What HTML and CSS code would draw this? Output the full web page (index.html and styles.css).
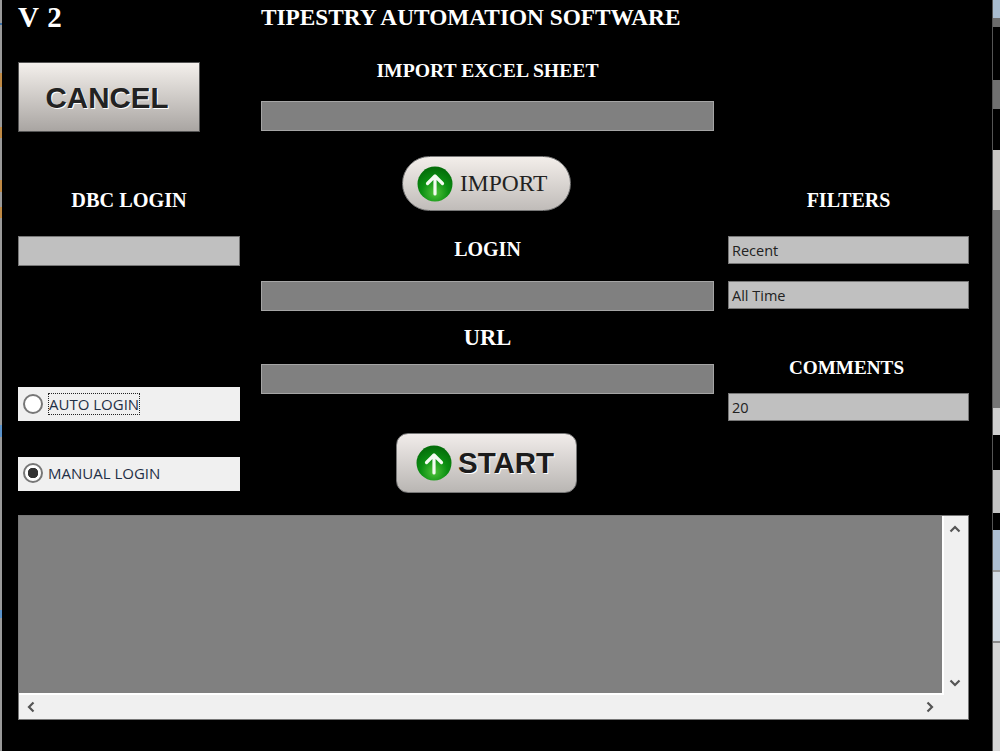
FILE: index.html
```html
<!DOCTYPE html>
<html lang="en">
<head>
<meta charset="utf-8">
<title>Tipestry Automation Software</title>
<link rel="stylesheet" href="styles.css">
</head>
<body>
<div class="desk">
  <div class="strip-left"></div>
  <main class="win">
    <div class="cols">
      <section class="col-left">
        <div class="version">V 2</div>
        <button class="cancel">CANCEL</button>
        <h2 class="lab dbc">DBC LOGIN</h2>
        <div class="field light"></div>
        <label class="radio auto"><span class="dot"></span><span class="focus">AUTO LOGIN</span></label>
        <label class="radio manual"><span class="dot on"></span><span>MANUAL LOGIN</span></label>
      </section>
      <section class="col-mid">
        <h1 class="title">TIPESTRY AUTOMATION SOFTWARE</h1>
        <h2 class="lab imp">IMPORT EXCEL SHEET</h2>
        <div class="field dark"></div>
        <button class="btn-import">
          <svg class="arrow" viewBox="0 0 36 36"><use href="#up"/></svg>IMPORT
        </button>
        <h2 class="lab login">LOGIN</h2>
        <div class="field dark"></div>
        <h2 class="lab url">URL</h2>
        <div class="field dark"></div>
        <button class="btn-start">
          <svg class="arrow" viewBox="0 0 36 36"><use href="#up"/></svg>START
        </button>
      </section>
      <section class="col-right">
        <h2 class="lab filters">FILTERS</h2>
        <div class="field grey">Recent</div>
        <div class="field grey second">All Time</div>
        <h2 class="lab comments">COMMENTS</h2>
        <div class="field grey">20</div>
      </section>
    </div>
    <div class="log">
      <div class="log-top">
        <div class="log-area"></div>
        <div class="vbar">
          <svg viewBox="0 0 12 8"><path d="M1.5 6.500 6 2l4.500 4.500" /></svg>
          <svg viewBox="0 0 12 8"><path d="M1.500 1.500 6 6l4.500-4.500" /></svg>
        </div>
      </div>
      <div class="hbar">
        <svg viewBox="0 0 8 12"><path d="M6.500 1.500 2 6l4.500 4.500" /></svg>
        <svg viewBox="0 0 8 12"><path d="M1.500 1.500 6 6l-4.500 4.500" /></svg>
      </div>
    </div>
  </main>
  <div class="strip-right">
    <div class="s s1"></div><div class="s s2"></div><div class="s s3"></div><div class="s s4"></div>
    <div class="s s5"></div><div class="s s6"></div><div class="s s7"></div><div class="s s8"></div>
    <div class="s s9"></div><div class="s s10"></div><div class="s s11"></div><div class="s s12"></div>
    <div class="s s13"></div><div class="s s14"></div>
  </div>
</div>
<svg class="defs" width="0" height="0" aria-hidden="true">
  <defs>
    <radialGradient id="ball" cx="50%" cy="75%" r="70%">
      <stop offset="0" stop-color="#4fc23a"/>
      <stop offset=".55" stop-color="#0b8f12"/>
      <stop offset="1" stop-color="#046e0a"/>
    </radialGradient>
    <symbol id="up" viewBox="0 0 36 36">
      <circle cx="18" cy="18" r="17.500" fill="url(#ball)"/>
      <path d="M18 28V10M10.500 17.500 18 10l7.500 7.500" fill="none" stroke="#f4fbf2" stroke-width="3.200" stroke-linecap="round" stroke-linejoin="round"/>
    </symbol>
  </defs>
</svg>
</body>
</html>
```
FILE: styles.css
```css
* { box-sizing: border-box; }
html, body { margin: 0; padding: 0; background: #000; }
.desk { display: flex; width: 1000px; height: 751px; overflow: hidden; }
.strip-left {
  width: 2px;
  background: linear-gradient(#9a9a9a 0 23px, #3a6ea5 23px 25px, #9a9a9a 25px 73px, #c08a45 73px 87px,
    #9a9a9a 87px 127px, #c08a45 127px 138px, #9a9a9a 138px 180px, #c08a45 180px 192px,
    #9a9a9a 192px 207px, #c08a45 207px 218px, #9a9a9a 218px 425px, #5b93cc 425px 437px,
    #9a9a9a 437px 610px, #5b93cc 610px 618px, #9a9a9a 618px);
}
.win { width: 990px; background: #000; padding: 0 23px 0 16px; }
.strip-right { width: 8px; display: flex; flex-direction: column; border-left: 1px solid #555; }
.s { flex: none; }
.s1 { height: 18px; background: #a9bccf; }
.s2 { height: 9px; background: #6c6c6c; }
.s3 { height: 53px; background: #000; }
.s4 { height: 29px; background: #707070; }
.s5 { height: 41px; background: #000; }
.s6 { height: 60px; background: #c8c6c3; }
.s7 { height: 198px; background: #757575; }
.s8 { height: 27px; background: #cfcfcf; }
.s9 { height: 35px; background: #000; }
.s10 { height: 43px; background: #c4c4c4; }
.s11 { height: 17px; background: #000; }
.s12 { height: 40px; background: #aebfd2; }
.s13 { height: 71px; background: #d3dbe3; border-top: 2px solid #999; }
.s14 { height: 110px; background: #d6d6d6; border-top: 2px solid #8a8a8a; }

.cols { display: flex; height: 515px; }
.col-left { width: 222px; margin-right: 21px; }
.col-mid { width: 453px; margin-right: 14px; display: flex; flex-direction: column; align-items: stretch; }
.col-right { width: 241px; }

.version, .title, .lab {
  font-family: "Liberation Serif", serif;
  font-weight: 700;
  color: #fff;
  margin: 0;
  text-align: center;
}
.version { font-size: 29px; line-height: 34px; text-align: left; height: 30px; letter-spacing: .8px; }
.title { font-size: 23.300px; line-height: 26px; margin-top: 4px; white-space: nowrap; text-align: left; }
.lab { font-size: 20px; line-height: 24px; white-space: nowrap; }

.field { height: 30px; border: 1px solid #777; }
.field.light { background: #c0c0c0; margin-top: 24px; }
.field.dark { background: #808080; border-color: #a5a5a5; }
.field.grey {
  height: 28px; background: #c0c0c0; border-color: #777;
  font: 14.500px/28px "Open Sans", sans-serif; color: #222; padding-left: 3px;
}
.field.grey.second { margin-top: 17px; }

.cancel {
  display: block; width: 182px; height: 70px; margin-top: 32px; padding: 2px 4px 0 0;
  border: 1px solid #555; border-radius: 0;
  background: linear-gradient(#f4f0ec, #a9a5a2);
  font: 700 29.500px "Liberation Sans", sans-serif; color: #222;
  text-shadow: 1px 1px 0 #fff;
}
.dbc { margin-top: 56px; font-size: 20.300px; }
.radio {
  display: flex; align-items: center; gap: 6px; height: 34px;
  background: #f0f0f0; padding-left: 5px;
  font: 15px "Open Sans", sans-serif; color: #1f2f46; white-space: nowrap;
}
.auto { margin-top: 121px; }
.manual { margin-top: 36px; gap: 5px; padding-bottom: 2px; }
.dot { width: 20px; height: 20px; border-radius: 50%; border: 2px solid #777; background: #fff; flex: none; }
.dot.on { background: radial-gradient(circle, #333 0 5px, #fff 5.500px); }
.focus { outline: 1px dotted #222; outline-offset: 0; line-height: 20px; }

.imp { margin-top: 28px; font-size: 19.700px; }
.imp + .field { margin-top: 19px; }
.btn-import {
  align-self: center; display: flex; align-items: center; justify-content: flex-start;
  width: 169px; height: 55px; margin: 25px 2px 0 0; padding: 0 0 0 14px; gap: 7px;
  border: 1px solid #777; border-radius: 28px;
  background: linear-gradient(#f3eeea, #c0bcb9);
  font: 23.500px "Liberation Serif", serif; color: #222;
}
.btn-import .arrow { width: 36px; height: 36px; }
.login { margin-top: 26px; }
.login + .field { margin-top: 20px; }
.url { margin-top: 15px; font-size: 22.500px; }
.url + .field { margin-top: 14px; }
.btn-start {
  align-self: center; display: flex; align-items: center;
  width: 181px; height: 60px; margin: 39px 2px 0 0; padding: 0 0 0 19px; gap: 6px;
  border: 1px solid #777; border-radius: 12px;
  background: linear-gradient(#f1ecea, #b9b6b3);
  font: 700 29.500px "Liberation Sans", sans-serif; color: #1c1c1c;
  text-shadow: 1px 1px 0 #fff;
}
.btn-start .arrow { width: 36px; height: 36px; }

.filters { margin-top: 188px; }
.filters + .field { margin-top: 24px; }
.comments { margin-top: 47px; padding-right: 4px; font-size: 19.200px; }
.comments + .field { margin-top: 13px; }

.log { width: 951px; height: 205px; border: 1px solid #777; background: #f0f0f0; display: flex; flex-direction: column; }
.log-top { display: flex; height: 179px; }
.log-area { width: 925px; background: #808080; border-right: 2px solid #fff; border-bottom: 2px solid #fff; }
.vbar { flex: 1; display: flex; flex-direction: column; justify-content: space-between; align-items: center; padding: 9px 3px 8px 0; }
.vbar svg { width: 12px; height: 8px; }
.hbar { flex: 1; display: flex; justify-content: space-between; align-items: center; padding: 0 34px 0 8px; }
.hbar svg { width: 8px; height: 12px; }
.vbar path, .hbar path { fill: none; stroke: #555; stroke-width: 2.200; }
.defs { position: absolute; }
```
